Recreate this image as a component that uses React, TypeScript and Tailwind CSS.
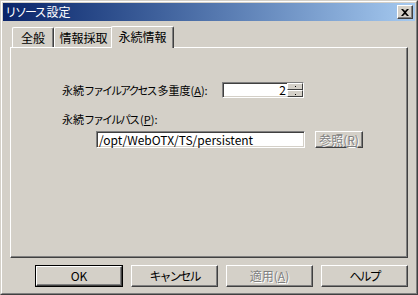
import { ReactNode } from "react";

const font = { fontFamily: '"MS UI Gothic", "Noto Sans CJK JP", "Liberation Sans", sans-serif' };

function Btn({ children, disabled, isDefault, className = "" }: { children: ReactNode; disabled?: boolean; isDefault?: boolean; className?: string }) {
  const bevel =
    "border border-t-white border-l-white border-r-[#404040] border-b-[#404040] shadow-[inset_-1px_-1px_0_#808080]";
  const inner = (
    <div
      className={`flex h-full w-full items-center justify-center whitespace-nowrap text-[12px] ${bevel} ${
        disabled ? "text-[#808080] [text-shadow:1px_1px_0_#fff]" : "text-black"
      }`}
    >
      {children}
    </div>
  );
  if (isDefault) {
    return <div className={`border border-black ${className}`}>{inner}</div>;
  }
  return <div className={className}>{inner}</div>;
}

function Tab({ label, active, width }: { label: string; active?: boolean; width: string }) {
  if (active) {
    return (
      <div
        className={`relative z-10 -mx-[2px] -mb-[1px] flex h-[22px] items-center justify-center rounded-t-[2px] border-t border-l border-r border-t-white border-l-white border-r-[#404040] bg-[#d4d0c8] pb-[2px] shadow-[inset_-1px_0_0_#808080] text-[12px] ${width}`}
      >
        {label}
      </div>
    );
  }
  return (
    <div
      className={`flex h-[20px] items-center justify-center rounded-t-[2px] border-t border-l border-r border-t-white border-l-white border-r-[#404040] pt-[1px] shadow-[inset_-1px_0_0_#808080] text-[12px] ${width}`}
    >
      {label}
    </div>
  );
}

// narrow katakana, like the bitmap UI font
function K({ children }: { children: ReactNode }) {
  return <span className="tracking-[-2px]">{children}</span>;
}

export default function App() {
  const sunken =
    "border border-t-[#808080] border-l-[#808080] border-r-white border-b-white shadow-[inset_1px_1px_0_#404040,inset_-1px_-1px_0_#d4d0c8]";
  return (
    <div className="h-[295px] w-[418px] overflow-hidden bg-[#d4d0c8]" style={font}>
      <div className="h-full w-full border border-t-[#d4d0c8] border-l-[#d4d0c8] border-r-[#404040] border-b-[#404040]">
        <div className="flex h-full w-full flex-col border border-t-white border-l-white border-r-[#808080] border-b-[#808080] p-[1px]">
          {/* Title bar */}
          <div className="flex h-[18px] items-center justify-between bg-gradient-to-r from-[#0a246a] to-[#a6caf0] pl-[2px] pr-[2px]">
            <span className="text-[12px] leading-none text-white">
              <K>リソース</K>
              <span className="ml-[2px]">設定</span>
            </span>
            <div className="flex h-[14px] w-[16px] items-center justify-center border border-t-white border-l-white border-r-[#404040] border-b-[#404040] bg-[#d4d0c8] shadow-[inset_-1px_-1px_0_#808080]">
              <svg width="8" height="7" viewBox="0 0 8 7">
                <path d="M0 0h2l2 2 2-2h2L5 3.5 8 7H6L4 5 2 7H0l3-3.5z" fill="#000" />
              </svg>
            </div>
          </div>

          {/* Tabs */}
          <div className="mt-[5px] flex items-end pl-[9px] text-black">
            <Tab label="全般" width="w-[42px]" />
            <Tab label="情報採取" width="w-[59px]" />
            <Tab label="永続情報" width="w-[63px]" active />
          </div>

          {/* Panel */}
          <div className="ml-[7px] mr-[7px] h-[211px] border border-t-white border-l-white border-r-[#404040] border-b-[#404040] pl-[51px] pt-[34px] shadow-[inset_-1px_-1px_0_#808080] text-[12px] text-black">
            <div className="flex h-[16px] items-center">
              <span className="w-[160px] whitespace-nowrap text-[11px]">
                永続<K>ファイルアクセス</K>
                <span className="ml-[2px]">多重度(<span className="underline">A</span>):</span>
              </span>
              <div className={`flex h-[16px] w-[82px] items-stretch bg-white ${sunken}`}>
                <div className="flex flex-1 items-center justify-end pr-[1px] leading-none">2</div>
                <div className="flex w-[16px] flex-col">
                  {[0, 1].map((i) => (
                    <div
                      key={i}
                      className="flex flex-1 items-center justify-center border border-t-white border-l-white border-r-[#404040] border-b-[#404040] bg-[#d4d0c8]"
                    >
                      <svg width="3" height="2" viewBox="0 0 3 2">
                        <path d={i === 0 ? "M1 0h1v1H1z" : "M1 1h1v1H1z"} fill="#000" />
                      </svg>
                    </div>
                  ))}
                </div>
              </div>
            </div>

            <div className="mt-[14px] flex h-[14px] items-center whitespace-nowrap text-[11px]">
              永続<K>ファイルパス</K>
              <span className="ml-[2px]">(<span className="underline">P</span>):</span>
            </div>

            <div className="ml-[34px] mt-[5px] flex items-center gap-[10px]">
              <div className={`flex h-[17px] w-[209px] items-center bg-white pl-[2px] ${sunken}`}>
                /opt/WebOTX/TS/persistent
              </div>
              <Btn disabled className="h-[17px] w-[48px]">
                参照(<span className="underline">R</span>)
              </Btn>
            </div>
          </div>

          {/* Bottom buttons */}
          <div className="mt-[7px] flex justify-end gap-[8px] pr-[7px]">
            <Btn isDefault className="h-[22px] w-[88px]">OK</Btn>
            <Btn className="h-[22px] w-[87px]">
              <K>キャンセル</K>
            </Btn>
            <Btn disabled className="h-[22px] w-[87px]">
              適用(<span className="underline">A</span>)
            </Btn>
            <Btn className="h-[22px] w-[87px]">
              <K>ヘルプ</K>
            </Btn>
          </div>
        </div>
      </div>
    </div>
  );
}
